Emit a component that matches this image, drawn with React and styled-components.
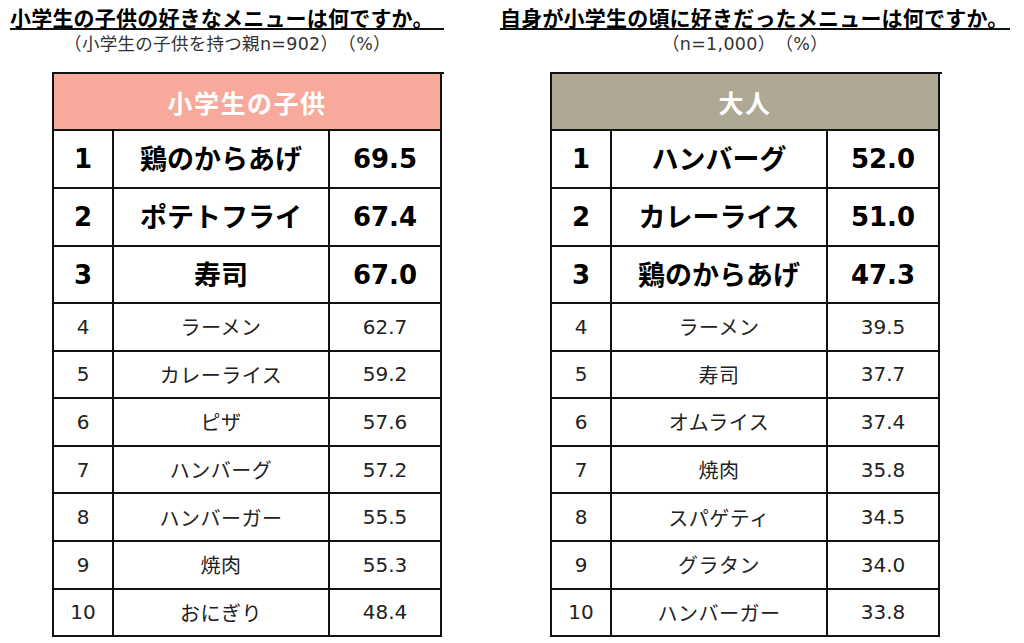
import React from 'react';
import styled, { createGlobalStyle } from 'styled-components';

const GlobalStyle = createGlobalStyle`
  body {
    margin: 0;
    background: #fff;
    font-family: "DejaVu Sans", "Noto Sans CJK JP", sans-serif;
    color: #111;
    text-spacing-trim: space-all;
  }
`;

const Page = styled.div`
  display: flex;
  align-items: flex-start;
  padding: 6px 0 0 10px;
  width: 1024px;
  height: 643px;
  box-sizing: border-box;
  overflow: hidden;
`;

const Panel = styled.section`
  display: flex;
  flex-direction: column;
  width: ${p => p.width}px;
`;

const Title = styled.h2`
  align-self: flex-start;
  margin: 0;
  padding-right: ${p => p.extra || 0}px;
  font-family: "Noto Sans CJK JP", sans-serif;
  font-size: 21px;
  font-weight: 700;
  line-height: 22px;
  letter-spacing: 0.2px;
  color: #000;
  border-bottom: 2px solid #111;
`;

const Subtitle = styled.p`
  margin: 4px 0 0;
  width: ${p => p.width}px;
  text-align: center;
  font-size: 17.5px;
  line-height: 20px;
  letter-spacing: 0.3px;
  color: #333;
`;

const Grid = styled.div`
  display: grid;
  grid-template-columns: 60px 216px 112px;
  grid-template-rows: 57px 58px 58px 57px repeat(7, 47.6px);
  margin: 18px 0 0 ${p => p.offset}px;
  border-top: 2px solid #111;
  border-left: 2px solid #111;
  width: 390px;
`;

const Header = styled.div`
  grid-column: 1 / -1;
  display: flex;
  align-items: center;
  justify-content: center;
  background: ${p => p.bg};
  border-right: 2px solid #111;
  border-bottom: 2px solid #111;
  font-family: "Noto Sans CJK JP", sans-serif;
  font-size: 25px;
  font-weight: 700;
  letter-spacing: 1.5px;
  color: #fff;
`;

const Cell = styled.div`
  display: flex;
  align-items: center;
  justify-content: center;
  box-sizing: border-box;
  border-right: 2px solid #111;
  border-bottom: 2px solid #111;
  font-size: ${p => (p.top ? 26 : 20)}px;
  font-weight: ${p => (p.top ? 700 : 400)};
  color: ${p => (p.top ? '#000' : '#222')};
  white-space: nowrap;
`;

const Name = styled(Cell)`
  font-family: "Noto Sans CJK JP", sans-serif;
  font-size: ${p => (p.top ? 27 : 20)}px;
  letter-spacing: ${p => (p.top ? 0 : 0.5)}px;
  padding-bottom: ${p => (p.top ? 3 : 0)}px;
`;

const kids = [
  ['1', '鶏のからあげ', '69.5'],
  ['2', 'ポテトフライ', '67.4'],
  ['3', '寿司', '67.0'],
  ['4', 'ラーメン', '62.7'],
  ['5', 'カレーライス', '59.2'],
  ['6', 'ピザ', '57.6'],
  ['7', 'ハンバーグ', '57.2'],
  ['8', 'ハンバーガー', '55.5'],
  ['9', '焼肉', '55.3'],
  ['10', 'おにぎり', '48.4'],
];

const adults = [
  ['1', 'ハンバーグ', '52.0'],
  ['2', 'カレーライス', '51.0'],
  ['3', '鶏のからあげ', '47.3'],
  ['4', 'ラーメン', '39.5'],
  ['5', '寿司', '37.7'],
  ['6', 'オムライス', '37.4'],
  ['7', '焼肉', '35.8'],
  ['8', 'スパゲティ', '34.5'],
  ['9', 'グラタン', '34.0'],
  ['10', 'ハンバーガー', '33.8'],
];

function Ranking({ label, bg, rows, offset }) {
  return (
    <Grid offset={offset}>
      <Header bg={bg}>{label}</Header>
      {rows.map(([rank, name, value]) => {
        const top = Number(rank) <= 3;
        return (
          <React.Fragment key={rank}>
            <Cell top={top}>{rank}</Cell>
            <Name top={top}>{name}</Name>
            <Cell top={top}>{value}</Cell>
          </React.Fragment>
        );
      })}
    </Grid>
  );
}

export default function App() {
  return (
    <>
      <GlobalStyle />
      <Page>
        <Panel width={490}>
          <Title extra={10}>小学生の子供の好きなメニューは何ですか。</Title>
          <Subtitle width={435}>（小学生の子供を持つ親n=902）（%）</Subtitle>
          <Ranking label="小学生の子供" bg="#f7aa9b" rows={kids} offset={42} />
        </Panel>
        <Panel width={520}>
          <Title extra={2}>自身が小学生の頃に好きだったメニューは何ですか。</Title>
          <Subtitle width={490}>（n=1,000）（%）</Subtitle>
          <Ranking label="大人" bg="#aea894" rows={adults} offset={50} />
        </Panel>
      </Page>
    </>
  );
}
